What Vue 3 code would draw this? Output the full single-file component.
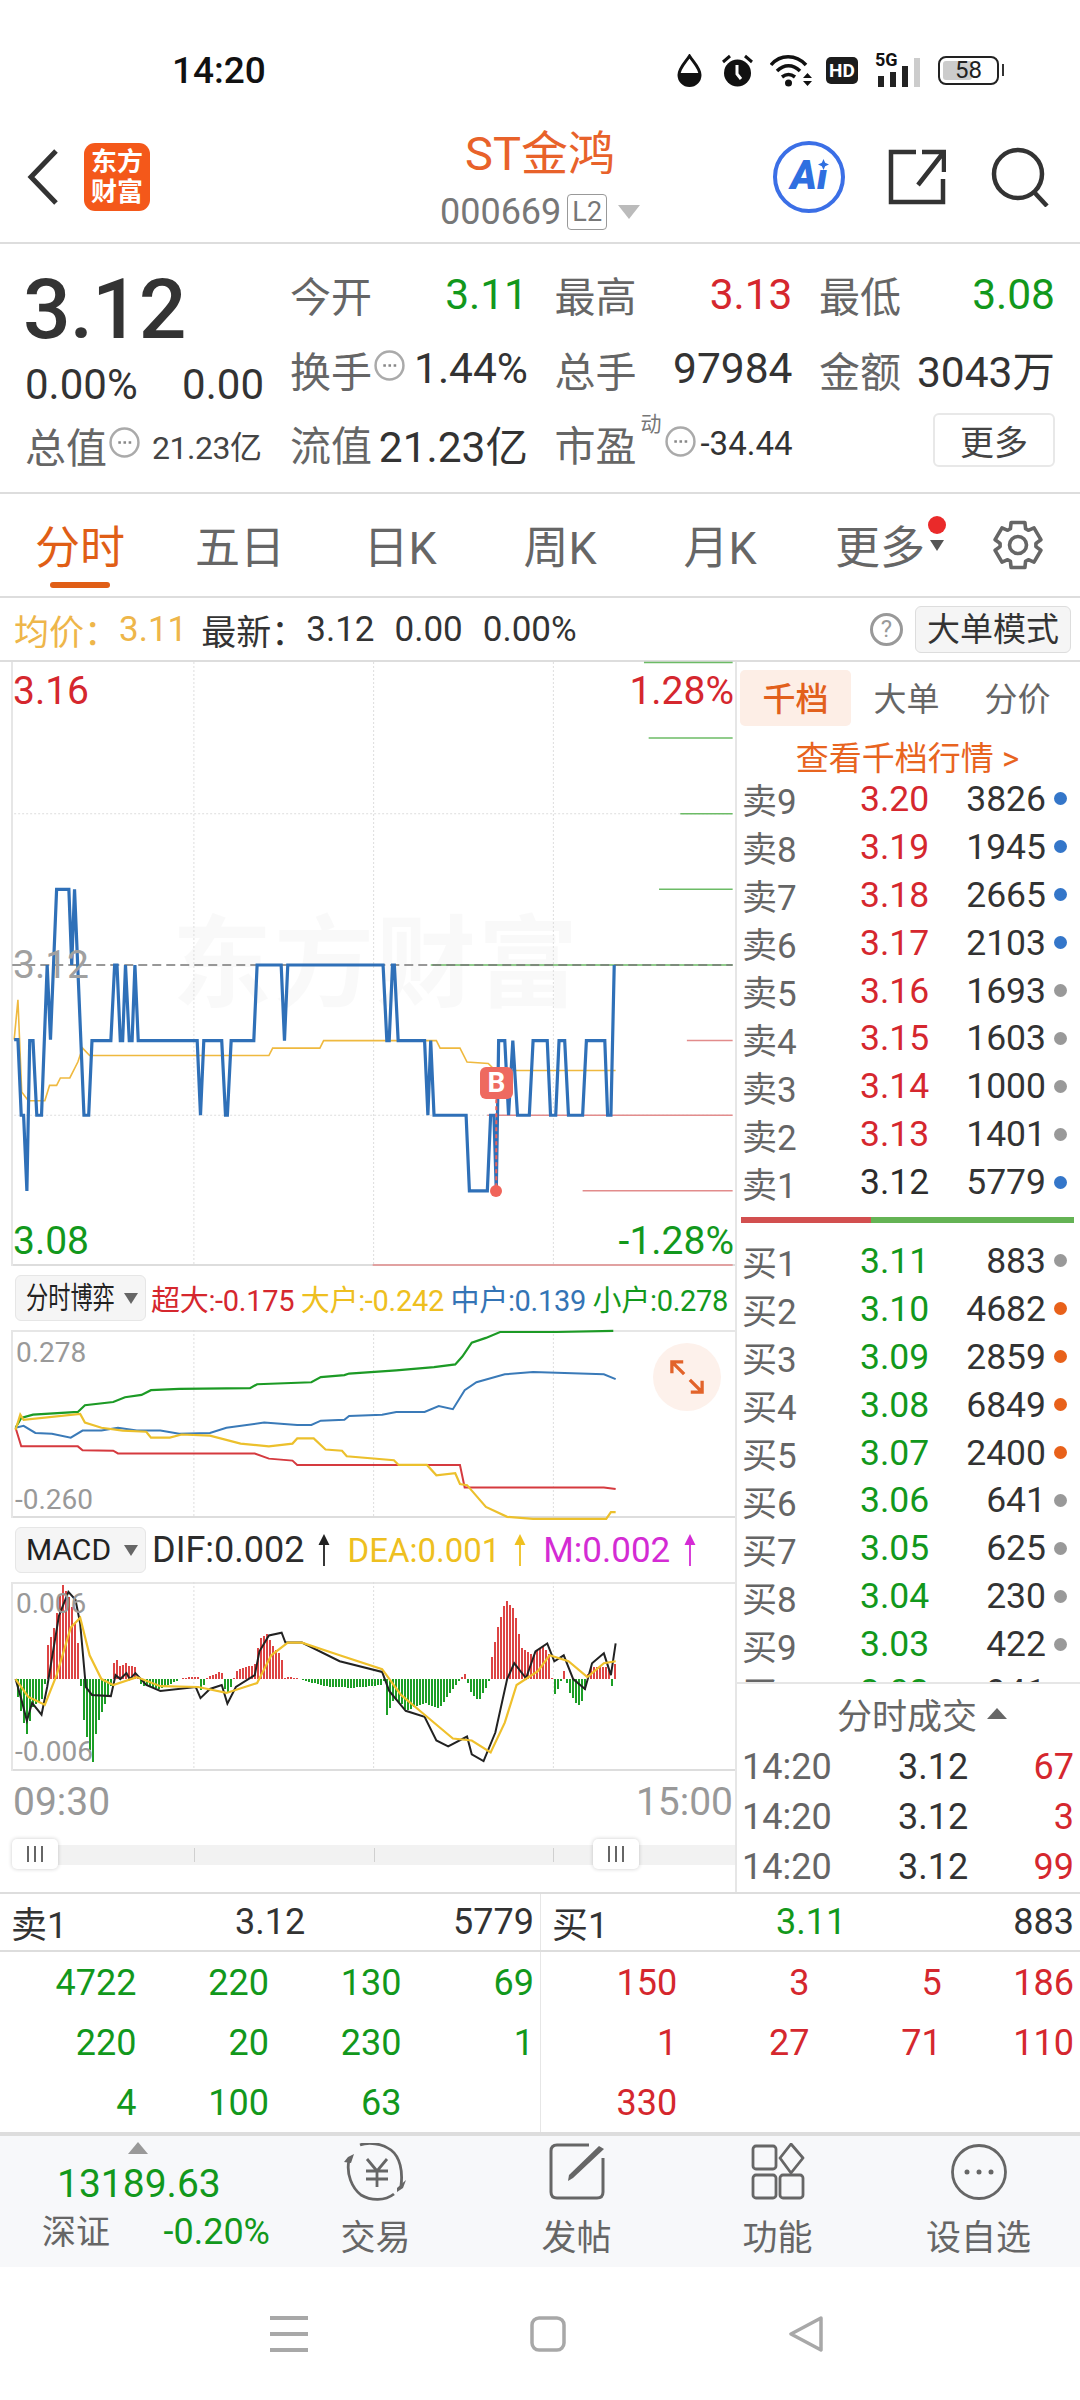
<template>
  <div class="page">
    <!-- status bar -->
    <div class="status">
      <span class="clock">14:20</span>
      <div class="status-icons">
        <svg class="st-drop" viewBox="0 0 25 33"><path d="M12.500 2C8 9 2 14 2 21a10.500 10.500 0 0 0 21 0C23 14 17 9 12.500 2Z" fill="#fff" stroke="#111" stroke-width="3"/><path d="M2 19h21v2a10.500 10.500 0 0 1-21 0Z" fill="#111"/></svg>
        <svg class="st-alarm" viewBox="0 0 31 33"><circle cx="15.500" cy="19" r="13.500" fill="#111"/><path d="M15 11v9l4 5" fill="none" stroke="#fff" stroke-width="3"/><path d="M1 8 8 2M30 8 23 2" stroke="#111" stroke-width="3"/></svg>
        <svg class="st-wifi" viewBox="0 0 43 33"><path d="M1 11C10 0 26 0 36 11M7 17c7-7 16-7 23 0M12 23c4-3 9-3 13 0" fill="none" stroke="#111" stroke-width="3.500"/><circle cx="18.500" cy="29" r="3.500" fill="#111"/><path d="M33 24l4.500-5 4.500 5ZM33 27l4.500 5 4.500-5Z" fill="#111"/></svg>
        <span class="st-hd">HD</span>
        <div class="st-sig">
          <span class="st-5g">5G</span>
          <i style="height:11px"></i><i style="height:15px"></i><i style="height:21px"></i><i class="off" style="height:29px"></i>
        </div>
        <div class="st-bat"><b></b><span>58</span></div>
        <i class="st-nub"></i>
      </div>
    </div>

    <!-- title bar -->
    <div class="head">
      <svg class="back" viewBox="0 0 32 56"><path d="M29 2 4 28l25 26" fill="none" stroke="#333" stroke-width="5"/></svg>
      <div class="logo">东方<br>财富</div>
      <div class="title">
        <div class="name">ST金鸿</div>
        <div class="code">000669<span class="l2">L2</span><i class="caret"></i></div>
      </div>
      <div class="ai"><span>Ai</span><svg viewBox="0 0 10 10"><path d="M5 0 6.500 3.500 10 5 6.500 6.500 5 10 3.500 6.500 0 5 3.500 3.500Z" fill="#2f6fe0"/></svg></div>
      <svg class="share" viewBox="0 0 58 56"><path d="M28 3H3v50h52V30M34 3h22v20M55 4 30 36" fill="none" stroke="#333" stroke-width="4.500"/></svg>
      <svg class="search" viewBox="0 0 60 60"><circle cx="28" cy="27" r="24" fill="none" stroke="#333" stroke-width="4.500"/><path d="m44 45 13 14" stroke="#333" stroke-width="4.500"/></svg>
    </div>

    <!-- quote summary -->
    <div class="quote">
      <div class="quote-left">
        <div class="price">3.12</div>
        <div class="chg"><span>0.00%</span><span>0.00</span></div>
        <div class="mcap">
          <span class="lb">总值</span>
          <svg class="dots" viewBox="0 0 30 30"><circle cx="15" cy="15" r="13.500" fill="none" stroke="#aaa" stroke-width="2.400"/><path d="M9 15h2.500M14 15h2.500M19 15h2.500" stroke="#888" stroke-width="2.400"/></svg>
          <span class="mv">21.23亿</span>
        </div>
      </div>
      <div class="quote-grid">
        <div class="cell"><span class="lb">今开</span><span class="g">3.11</span></div>
        <div class="cell"><span class="lb">最高</span><span class="r">3.13</span></div>
        <div class="cell"><span class="lb">最低</span><span class="g">3.08</span></div>
        <div class="cell"><span class="lb">换手<svg class="dots" viewBox="0 0 30 30"><circle cx="15" cy="15" r="13.500" fill="none" stroke="#aaa" stroke-width="2.400"/><path d="M9 15h2.500M14 15h2.500M19 15h2.500" stroke="#888" stroke-width="2.400"/></svg></span><span class="d">1.44%</span></div>
        <div class="cell"><span class="lb">总手</span><span class="d">97984</span></div>
        <div class="cell"><span class="lb">金额</span><span class="d">3043万</span></div>
        <div class="cell"><span class="lb">流值</span><span class="d">21.23亿</span></div>
        <div class="cell">
          <span class="lb pe">市盈<sup>动</sup><svg class="dots" viewBox="0 0 30 30"><circle cx="15" cy="15" r="13.500" fill="none" stroke="#aaa" stroke-width="2.400"/><path d="M9 15h2.500M14 15h2.500M19 15h2.500" stroke="#888" stroke-width="2.400"/></svg></span>
          <span class="d small">-34.44</span>
        </div>
        <div class="cell end"><button class="more">更多</button></div>
      </div>
    </div>

    <!-- period tabs -->
    <div class="tabs">
      <div v-for="(t, i) in tabs" :key="t" class="tab" :class="{ on: i === 0 }">
        {{ t }}
        <template v-if="t === '更多'"><i class="tab-caret"></i><i class="tab-dot"></i></template>
      </div>
      <svg class="gear" viewBox="0 0 50 50"><path :d="gearPath" fill="none" stroke="#666" stroke-width="3.600" stroke-linejoin="round"/><circle cx="25" cy="25" r="8.500" fill="none" stroke="#666" stroke-width="3.600"/></svg>
    </div>

    <!-- average / latest line -->
    <div class="avg">
      <span class="y">均价：</span><span class="y">3.11</span>
      <span class="lat">最新：</span><span>3.12</span><span class="gap">0.00</span><span class="gap">0.00%</span>
      <span class="help">?</span>
      <span class="mode">大单模式</span>
    </div>

    <div class="main">
      <div class="left">
        <!-- price chart -->
        <div class="chart price-chart">
          <div class="mark">东方财富</div>
          <svg viewBox="0 346 1558 1214" preserveAspectRatio="none">
            <path v-for="x in grid" :key="x" :d="`M${x} 346V1560`" class="dot-line"/>
            <path d="M30 651H1553M30 1257H1553" class="dot-line"/>
            <path v-for="l in greenDepth" :key="l[1]" :d="`M${l[0]} ${l[1]}H1553`" class="ln" stroke="#6cbb66" stroke-width="1.500"/>
            <path v-for="l in redDepth" :key="l[1]" :d="`M${l[0]} ${l[1]}H1553`" class="ln" stroke="#e28c8c" stroke-width="1.500"/>
            <path d="M26 955H1553" class="ln" stroke="#777" stroke-width="1.500" stroke-dasharray="9 5"/>
            <polyline :points="avgLine" class="ln" stroke="#efb93f" stroke-width="1.600"/>
            <polyline :points="priceLine" class="ln" stroke="#2f70b8" stroke-width="3.200"/>
            <path d="M1052 1225V1409" class="ln" stroke="#ee6259" stroke-width="2" stroke-dasharray="4 3"/>
          </svg>
          <span class="ax r tl">3.16</span>
          <span class="ax r tr">1.28%</span>
          <span class="ax mid">3.12</span>
          <span class="ax g bl">3.08</span>
          <span class="ax g br">-1.28%</span>
          <span class="b-tag">B</span>
          <i class="b-dot"></i>
        </div>

        <!-- 分时博弈 -->
        <div class="ind-row">
          <div class="sel"><span class="squeeze">分时博弈</span><i class="sel-caret"></i></div>
          <div class="legend">
            <span class="r">超大:-0.175</span><span class="y2">大户:-0.242</span><span class="b">中户:0.139</span><span class="g">小户:0.278</span>
          </div>
        </div>
        <div class="chart game-chart">
          <svg viewBox="0 178 1558 475" preserveAspectRatio="none">
            <path v-for="x in grid" :key="x" :d="`M${x} 178V653`" class="dot-line"/>
            <polyline :points="gameGreen" class="ln" stroke="#1c9a25" stroke-width="2.200"/>
            <polyline :points="gameBlue" class="ln" stroke="#3a7ab8" stroke-width="2"/>
            <polyline :points="gameRed" class="ln" stroke="#d53a3f" stroke-width="2"/>
            <polyline :points="gameYellow" class="ln" stroke="#ecc02c" stroke-width="2.200"/>
          </svg>
          <span class="ax gy s tl2">0.278</span>
          <span class="ax gy s bl2">-0.260</span>
          <div class="expand">
            <svg viewBox="0 0 36 36"><path d="M2 14V2h12M2 2l13 13M34 22v12H22M34 34 21 21" fill="none" stroke="#e2632a" stroke-width="3.500"/></svg>
          </div>
        </div>

        <!-- MACD -->
        <div class="ind-row">
          <div class="sel"><span class="plain">MACD</span><i class="sel-caret"></i></div>
          <div class="legend-m">
            <span class="dk f36">DIF:0.002</span><svg class="arr" viewBox="0 0 12 32"><path d="M6 32V3M2 10l4-8 4 8Z" fill="#222" stroke="#222" stroke-width="1.800"/></svg>
            <span class="y2 f33">DEA:0.001</span><svg class="arr" viewBox="0 0 12 32"><path d="M6 32V3M2 10l4-8 4 8Z" fill="#efc020" stroke="#efc020" stroke-width="1.800"/></svg>
            <span class="pk f35">M:0.002</span><svg class="arr" viewBox="0 0 12 32"><path d="M6 32V3M2 10l4-8 4 8Z" fill="#d42bd4" stroke="#d42bd4" stroke-width="1.800"/></svg>
          </div>
        </div>
        <div class="chart macd-chart">
          <svg viewBox="0 815 1558 477" preserveAspectRatio="none">
            <path v-for="x in grid" :key="x" :d="`M${x} 815V1292`" class="dot-line"/>
            <path :d="bars.red" stroke="#dd4444" stroke-width="4.240" fill="none" shape-rendering="crispEdges"/>
            <path :d="bars.green" stroke="#1c9e26" stroke-width="4.240" fill="none" shape-rendering="crispEdges"/>
            <polyline :points="macdBlack" class="ln" stroke="#222" stroke-width="2"/>
            <polyline :points="macdYellow" class="ln" stroke="#efc02c" stroke-width="2.200"/>
          </svg>
          <span class="ax gy s tl3">0.006</span>
          <span class="ax gy s bl3">-0.006</span>
        </div>

        <div class="times"><span>09:30</span><span>15:00</span></div>
        <div class="slider">
          <div class="track">
            <i v-for="n in 3" :key="n" class="tick"></i>
          </div>
          <div class="handle h1"><b></b><b></b><b></b></div>
          <div class="handle h2"><b></b><b></b><b></b></div>
        </div>
      </div>

      <!-- order book -->
      <div class="side">
        <div class="side-tabs">
          <span class="on">千档</span><span>大单</span><span>分价</span>
        </div>
        <div class="see">查看千档行情 &gt;</div>
        <div class="book">
          <div v-for="o in asks" :key="o.n" class="book-row">
            <span class="n">{{ o.n }}</span>
            <span class="p" :class="o.c">{{ o.p }}</span>
            <span class="v">{{ o.v }}</span>
            <i class="pt" :class="o.t"></i>
          </div>
          <div class="split"><i></i><b></b></div>
          <div v-for="o in bids" :key="o.n" class="book-row">
            <span class="n">{{ o.n }}</span>
            <span class="p g">{{ o.p }}</span>
            <span class="v">{{ o.v }}</span>
            <i class="pt" :class="o.t"></i>
          </div>
        </div>
        <div class="deal-head">分时成交<i></i></div>
        <div v-for="(d, i) in deals" :key="i" class="deal">
          <span class="t">14:20</span><span class="dp">3.12</span><span class="dv r">{{ d }}</span>
        </div>
      </div>
    </div>

    <!-- best quote and ticks -->
    <div class="best">
      <div class="best-half"><span class="bn">卖1</span><span class="bp">3.12</span><span class="bv">5779</span></div>
      <div class="best-half line"><span class="bn">买1</span><span class="bp g">3.11</span><span class="bv">883</span></div>
    </div>
    <div class="ticks">
      <div class="tick-grid g"><span v-for="(v, i) in sellTicks" :key="i">{{ v }}</span></div>
      <div class="tick-grid r line"><span v-for="(v, i) in buyTicks" :key="i">{{ v }}</span></div>
    </div>

    <!-- footer -->
    <div class="foot">
      <div class="index">
        <i class="up"></i>
        <div class="idx-num">13189.63</div>
        <div class="idx-sub"><span>深证</span><span class="g">-0.20%</span></div>
      </div>
      <div class="fitem">
        <svg viewBox="0 0 64 58"><path d="M16 2C24-1 38 0 47 7c9 7 12 21 10 36M5 17C2 31 8 45 17 52c10 6 24 6 33-1" fill="none" stroke="#666" stroke-width="2.800"/><path d="M0 19 4 14l6-3-3 9ZM53 45l9-8-3 8-6 4Z" fill="#666"/><path d="M23 16l10 12 10-12M22 28h22M22 36h22M33 28v16" fill="none" stroke="#666" stroke-width="2.800"/></svg>
        <span>交易</span>
      </div>
      <div class="fitem">
        <svg viewBox="0 0 64 58"><path d="M44 2H12Q6 2 6 8v41q0 6 6 6h40q6 0 6-6V15" fill="none" stroke="#666" stroke-width="3"/><path d="M54 3 59 6 28 35l-5 3 1-6Z" fill="#666"/></svg>
        <span>发帖</span>
      </div>
      <div class="fitem">
        <svg viewBox="0 0 64 58"><rect x="7" y="3" width="23" height="23" rx="3" fill="none" stroke="#666" stroke-width="2.800"/><path d="M45 1 57 15 45 30 34 15Z" fill="none" stroke="#666" stroke-width="2.800" stroke-linejoin="round"/><rect x="7" y="32" width="23" height="23" rx="3" fill="none" stroke="#666" stroke-width="2.800"/><rect x="34" y="32" width="23" height="23" rx="3" fill="none" stroke="#666" stroke-width="2.800"/></svg>
        <span>功能</span>
      </div>
      <div class="fitem">
        <svg viewBox="0 0 64 58"><circle cx="32" cy="29" r="26.500" fill="none" stroke="#666" stroke-width="2.800"/><circle cx="20" cy="29" r="2.500" fill="#666"/><circle cx="32" cy="29" r="2.500" fill="#666"/><circle cx="44" cy="29" r="2.500" fill="#666"/></svg>
        <span>设自选</span>
      </div>
    </div>

    <!-- system navigation -->
    <div class="sysnav">
      <svg class="nv-menu" viewBox="0 0 38 36"><path d="M0 2h38M0 18h38M0 34h38" stroke="#a8a8a8" stroke-width="4"/></svg>
      <svg class="nv-home" viewBox="0 0 36 36"><rect x="2" y="2" width="32" height="32" rx="7" fill="none" stroke="#a8a8a8" stroke-width="3.500"/></svg>
      <svg class="nv-back" viewBox="0 0 36 36"><path d="M33 2 3 18l30 16Z" fill="none" stroke="#a8a8a8" stroke-width="3.500" stroke-linejoin="round"/></svg>
    </div>
  </div>
</template>

<script setup>
import { computed } from 'vue'

const tabs = ['分时', '五日', '日K', '周K', '月K', '更多']
const grid = [411, 792, 1173]

// six teeth, one pointing straight up
const gearPath = computed(() => {
  const p = (deg, r) => {
    const a = (deg * Math.PI) / 180
    return `${(25 + r * Math.cos(a)).toFixed(1)} ${(25 + r * Math.sin(a)).toFixed(1)}`
  }
  let d = ''
  for (let k = 0; k < 6; k++) {
    const t = k * 60 - 90
    d += `${k ? 'L' : 'M'}${p(t - 25, 18)}L${p(t - 17, 23.5)}L${p(t + 17, 23.5)}L${p(t + 25, 18)}`
  }
  return d + 'Z'
})

// all chart points below were read off the zoomed crops, so the viewBoxes use that scale
const greenDepth = [[1365, 347], [1375, 499], [1442, 651], [1397, 803], [913, 955]]
const redDepth = [[1456, 1107], [1033, 1257], [1235, 1409], [790, 1558]]

const priceLine = '30,1105 38,1105 45,1257 50,1257 57,1409 63,1107 70,1107 78,1257 88,1257 100,955 107,1105 120,803 146,803 152,955 158,803 178,1257 188,1257 195,1107 235,1107 243,955 248,955 255,1107 260,1107 266,955 274,1107 280,1107 286,955 293,1107 418,1107 425,1257 432,1107 470,1107 478,1257 482,1257 490,1107 538,1107 545,955 596,955 603,1107 610,955 812,955 820,1107 825,1107 832,955 836,955 844,1107 900,1107 907,1257 913,1107 920,1257 988,1257 995,1409 1033,1409 1040,1257 1047,1257 1052,1409 1057,1107 1070,1107 1078,1257 1087,1107 1097,1257 1122,1257 1130,1107 1160,1107 1167,1257 1178,1257 1185,1107 1197,1107 1205,1257 1235,1257 1243,1107 1282,1107 1288,1257 1295,1257 1302,955'
const avgLine = '30,1105 38,1025 46,1210 60,1228 95,1228 105,1197 120,1197 128,1182 148,1182 165,1150 175,1122 190,1137 570,1137 578,1122 678,1122 686,1107 925,1107 933,1122 975,1122 990,1150 1035,1153 1050,1167 1305,1167'

const gameGreen = '33,425 45,400 70,392 165,385 180,368 240,360 265,348 300,342 320,330 380,327 530,325 545,315 660,310 680,297 730,292 740,288 840,280 920,272 965,265 980,245 1000,210 1030,198 1060,183 1180,183 1300,180'
const gameBlue = '33,425 50,420 75,438 110,440 150,450 175,432 215,432 250,425 290,432 340,432 380,440 445,438 480,425 560,412 630,418 660,418 680,407 730,405 740,395 810,392 840,385 900,385 930,370 960,378 985,330 1010,310 1070,290 1130,284 1280,290 1305,302'
const gameYellow = '33,430 43,392 50,405 170,390 180,412 215,425 260,432 310,435 320,450 360,450 385,442 445,445 510,465 570,472 620,465 630,452 665,452 690,480 725,483 735,497 835,507 845,519 905,519 925,545 965,540 975,567 990,570 1030,625 1075,650 1130,655 1285,655 1295,638 1305,638'
const gameRed = '33,425 45,472 165,472 175,482 240,483 250,490 540,490 570,503 620,508 630,519 975,519 985,576 1280,576 1305,580'

const macdBlack = '33,1060 45,1110 57,1165 68,1120 88,1150 100,1080 125,900 145,840 160,860 170,920 182,1080 195,1100 235,1103 245,1050 255,1060 268,1045 275,1060 287,1045 310,1075 340,1090 415,1080 425,1108 445,1085 470,1075 482,1122 500,1080 540,1050 550,990 570,950 597,943 605,968 640,968 720,1015 810,1042 825,1090 860,1140 900,1155 925,1215 950,1230 990,1205 1000,1250 1025,1267 1050,1195 1075,1060 1090,1020 1115,1058 1135,990 1160,970 1175,1015 1195,1000 1215,1060 1240,1085 1255,1020 1280,995 1295,1050 1305,970'
const macdYellow = '33,1060 60,1105 95,1125 120,1050 150,930 170,905 190,1000 215,1060 240,1075 290,1055 340,1078 420,1080 480,1095 545,1070 575,1000 610,968 640,968 720,1000 810,1035 850,1100 900,1150 960,1210 1000,1215 1040,1245 1070,1170 1095,1075 1140,1040 1165,1000 1205,1015 1245,1055 1280,1020 1305,1015'

// histogram outline: [x, height above the zero line]
const hist = [[33,0],[40,-60],[57,-140],[70,-70],[90,-50],[97,0],[100,80],[115,130],[132,240],[150,200],[165,100],[168,0],[172,-20],[180,-130],[190,-170],[195,-232],[205,-120],[220,-70],[235,-20],[238,0],[240,40],[250,50],[255,30],[267,40],[275,30],[285,35],[295,0],[300,-15],[340,-25],[375,-5],[380,0],[400,5],[420,5],[422,0],[425,-30],[435,-10],[438,0],[440,5],[470,20],[472,0],[480,-40],[490,-20],[495,0],[500,20],[520,30],[540,35],[550,100],[565,115],[580,80],[597,60],[600,0],[610,5],[630,3],[640,0],[645,-5],[700,-20],[750,-22],[810,-15],[815,0],[820,-90],[835,-50],[850,-60],[860,-80],[900,-60],[930,-75],[975,0],[985,15],[990,0],[995,-30],[1015,-55],[1035,-10],[1037,0],[1040,40],[1055,130],[1072,200],[1090,175],[1105,80],[1130,60],[1150,85],[1165,60],[1170,0],[1177,-45],[1185,-15],[1190,0],[1195,20],[1200,0],[1205,-30],[1225,-68],[1237,-50],[1243,0],[1250,30],[1290,30],[1292,0],[1293,-40],[1300,0],[1305,60]]

// one bar every 3 screen pixels
const bars = computed(() => {
  let red = ''
  let green = ''
  let j = 0
  for (let px = 18; px <= 615; px += 3) {
    const x = px * 2.119
    while (j < hist.length - 2 && hist[j + 1][0] < x) j++
    const [x0, h0] = hist[j]
    const [x1, h1] = hist[j + 1]
    const h = h0 + ((h1 - h0) * Math.min(1, (x - x0) / (x1 - x0)))
    const seg = `M${x.toFixed(2)} 1060V${(1060 - h).toFixed(1)}`
    if (h > 0) red += seg
    else if (h < 0) green += seg
  }
  return { red, green }
})

const asks = [
  { n: '卖9', p: '3.20', v: 3826, t: 'blue', c: 'r' },
  { n: '卖8', p: '3.19', v: 1945, t: 'blue', c: 'r' },
  { n: '卖7', p: '3.18', v: 2665, t: 'blue', c: 'r' },
  { n: '卖6', p: '3.17', v: 2103, t: 'blue', c: 'r' },
  { n: '卖5', p: '3.16', v: 1693, t: 'grey', c: 'r' },
  { n: '卖4', p: '3.15', v: 1603, t: 'grey', c: 'r' },
  { n: '卖3', p: '3.14', v: 1000, t: 'grey', c: 'r' },
  { n: '卖2', p: '3.13', v: 1401, t: 'grey', c: 'r' },
  { n: '卖1', p: '3.12', v: 5779, t: 'blue', c: 'dk' },
]
const bids = [
  { n: '买1', p: '3.11', v: 883, t: 'grey' },
  { n: '买2', p: '3.10', v: 4682, t: 'orange' },
  { n: '买3', p: '3.09', v: 2859, t: 'orange' },
  { n: '买4', p: '3.08', v: 6849, t: 'orange' },
  { n: '买5', p: '3.07', v: 2400, t: 'orange' },
  { n: '买6', p: '3.06', v: 641, t: 'grey' },
  { n: '买7', p: '3.05', v: 625, t: 'grey' },
  { n: '买8', p: '3.04', v: 230, t: 'grey' },
  { n: '买9', p: '3.03', v: 422, t: 'grey' },
  { n: '买10', p: '3.02', v: 941, t: 'grey' },
]
const deals = [67, 3, 99]
const sellTicks = [4722, 220, 130, 69, 220, 20, 230, 1, 4, 100, 63, '']
const buyTicks = [150, 3, 5, 186, 1, 27, 71, 110, 330, '', '', '']
</script>

<style>
body { margin: 0; background: #fff; }
</style>

<style scoped>
.page {
  width: 1080px;
  height: 2400px;
  overflow: hidden;
  background: #fff;
  color: #333;
  font-family: Roboto, "Noto Sans CJK SC", sans-serif;
}
i, b { display: block; font-style: normal; }
.g { color: #12981c; }
.r { color: #d5272e; }
.b { color: #3474b5; }
.y { color: #eeb64a; }
.y2 { color: #eebf20; }
.dk { color: #2c2c2c; }
.pk { color: #d42bd4; }

/* status bar */
.status {
  height: 120px;
  padding: 20px 76px 0 172px;
  display: flex;
  align-items: center;
  justify-content: space-between;
  box-sizing: border-box;
}
.clock { font-size: 37px; font-weight: 500; color: #111; }
.status-icons { display: flex; align-items: center; }
.st-drop { width: 25px; height: 33px; }
.st-alarm { width: 31px; height: 33px; margin-left: 20px; }
.st-wifi { width: 43px; height: 33px; margin-left: 17px; }
.st-hd {
  margin-left: 13px;
  width: 32px;
  height: 27px;
  line-height: 27px;
  text-align: center;
  background: #1c1c1c;
  color: #fff;
  font-size: 19px;
  font-weight: 700;
  border-radius: 5px;
}
.st-sig { margin-left: 17px; width: 45px; height: 33px; display: flex; align-items: flex-end; gap: 6.500px; position: relative; padding-left: 3px; box-sizing: border-box; }
.st-sig i { width: 5.500px; background: #222; }
.st-sig i.off { background: #ccc; }
.st-5g { position: absolute; left: 0; top: -4px; font-size: 18px; line-height: 20px; font-weight: 700; color: #111; }
.st-bat {
  margin-left: 18px;
  width: 61px;
  height: 29px;
  box-sizing: border-box;
  border: 2px solid #222;
  border-radius: 8px;
  position: relative;
  text-align: center;
  font-size: 24px;
  line-height: 25px;
  color: #222;
}
.st-bat b { position: absolute; left: 3px; top: 3px; bottom: 3px; width: 29px; background: #ccc; border-radius: 3px; }
.st-bat span { position: relative; }
.st-nub { width: 2px; height: 12px; margin-left: 3px; background: #333; }

/* title bar */
.head {
  height: 124px;
  padding-bottom: 9px;
  display: flex;
  align-items: center;
  border-bottom: 2px solid #ddd;
  position: relative;
  box-sizing: border-box;
}
.back { width: 32px; height: 56px; margin-left: 27px; }
.logo {
  margin-left: 25px;
  width: 66px;
  height: 68px;
  border-radius: 11px;
  background: #f4581a;
  color: #fff;
  font-size: 26px;
  font-weight: 700;
  line-height: 30px;
  text-align: center;
  padding-top: 4px;
  box-sizing: border-box;
}
.title { position: absolute; left: 0; right: 0; top: 5px; text-align: center; pointer-events: none; }
.name { font-size: 47px; line-height: 58px; color: #e8622a; }
.code { display: flex; align-items: center; justify-content: center; font-size: 36px; color: #777; line-height: 42px; margin-top: 8px; }
.l2 {
  margin-left: 6px;
  border: 1.500px solid #999;
  border-radius: 4px;
  font-size: 27px;
  line-height: 34px;
  padding: 0 4px;
}
.caret {
  margin-left: 11px;
  border-left: 11px solid transparent;
  border-right: 11px solid transparent;
  border-top: 14px solid #bbb;
}
.ai {
  margin-left: auto;
  width: 72px;
  height: 72px;
  box-sizing: border-box;
  border: 4px solid #3b6fe6;
  border-radius: 50%;
  position: relative;
  text-align: center;
  font-size: 40px;
  line-height: 62px;
  font-weight: 900;
  font-style: italic;
  color: #2f6fe0;
}
.ai svg { position: absolute; width: 11px; height: 11px; left: 41px; top: 14px; background: #fff; }
.share { width: 58px; height: 56px; margin-left: 43px; }
.search { width: 60px; height: 60px; margin-left: 44px; margin-right: 30px; }

/* quote summary */
.quote { height: 250px; display: flex; border-bottom: 2px solid #ddd; box-sizing: border-box; }
.quote-left { width: 290px; padding-left: 25px; padding-top: 16px; box-sizing: border-box; }
.price { font-size: 84px; font-weight: 500; line-height: 100px; color: #333; letter-spacing: -1px; margin-left: -2px; }
.chg { display: flex; justify-content: space-between; width: 239px; font-size: 42px; line-height: 50px; }
.mcap { display: flex; align-items: center; height: 70px; white-space: nowrap; }
.lb { color: #666; font-size: 41px; display: inline-flex; align-items: center; white-space: nowrap; }
.dots { width: 31px; height: 31px; flex: none; margin: -6px 0 0 2px; }
.mv { font-size: 32px; margin-left: 12px; color: #444; letter-spacing: -0.500px; }
.quote-grid {
  display: grid;
  grid-template-columns: 238px 238px 236px;
  column-gap: 26.500px;
  grid-auto-rows: 74.500px;
  padding-top: 13px;
}
.cell { display: flex; justify-content: space-between; align-items: center; font-size: 42.500px; white-space: nowrap; min-width: 0; }
.cell .d { color: #333; }
.cell .small { font-size: 33px; }
.pe { position: relative; }
.pe sup { font-size: 21px; line-height: 1; margin: -38px 0 0 4px; color: #777; }
.pe .dots { margin: -4px 0 0 3px; }
.end { justify-content: flex-end; }
.more {
  width: 122px;
  height: 54px;
  background: #fff;
  border: 2px solid #e8e8e8;
  border-radius: 6px;
  font: 34px Roboto, "Noto Sans CJK SC", sans-serif;
  color: #444;
  padding: 0;
  margin-top: -6px;
}

/* tabs */
.tabs { height: 104px; display: flex; align-items: center; border-bottom: 2px solid #ddd; box-sizing: border-box; }
.tab { width: 160px; text-align: center; font-size: 45px; color: #666; line-height: 110px; position: relative; height: 102px; white-space: nowrap; }
.tab.on { color: #e05e16; }
.tab.on::after {
  content: '';
  position: absolute;
  left: 50px;
  width: 60px;
  bottom: 8px;
  height: 6px;
  border-radius: 3px;
  background: #e05e16;
}
.tab-caret {
  position: absolute;
  right: 16px;
  top: 46px;
  border-left: 7.500px solid transparent;
  border-right: 7.500px solid transparent;
  border-top: 11px solid #555;
}
.tab-dot { position: absolute; right: 14px; top: 22px; width: 18px; height: 18px; border-radius: 50%; background: #ea2a2a; }
.gear { width: 50px; height: 50px; margin-left: 33px; }

/* avg line */
.avg { height: 64px; box-sizing: border-box; display: flex; align-items: center; border-bottom: 2px solid #ddd; padding: 0 9px 0 14px; font-size: 35px; color: #333; white-space: nowrap; }
.lat { margin-left: 14px; }
.gap { margin-left: 20px; }
.help {
  margin-left: auto;
  width: 33px;
  height: 33px;
  box-sizing: border-box;
  border-radius: 50%;
  border: 3px solid #999;
  color: #999;
  font-size: 24px;
  line-height: 27px;
  text-align: center;
}
.mode {
  margin-left: 12px;
  width: 156px;
  height: 47px;
  box-sizing: border-box;
  line-height: 45px;
  text-align: center;
  background: #f5f5f5;
  border: 1px solid #ddd;
  border-radius: 6px;
  font-size: 33px;
  color: #333;
}

.main { height: 1230px; display: flex; }
.left { width: 735px; flex: none; }

/* charts: rules are inset shadows so the svg fills the whole box */
.chart { position: relative; margin-left: 11px; width: 724px; box-shadow: inset 2px 0 0 #e6e6e6; }
.chart svg { position: absolute; left: -11px; top: 0; width: 735px; height: 100%; overflow: visible; }
.ln { fill: none; vector-effect: non-scaling-stroke; }
.dot-line { fill: none; stroke: #ddd; stroke-width: 1; stroke-dasharray: 2 2; vector-effect: non-scaling-stroke; }
.price-chart { height: 604px; box-shadow: inset 2px 0 0 #e6e6e6, inset 0 -2px 0 #ddd; }
.mark {
  position: absolute;
  left: 161px;
  top: 248px;
  font-size: 100px;
  line-height: 110px;
  letter-spacing: 2px;
  color: rgba(0, 0, 0, 0.025);
  font-weight: 700;
  white-space: nowrap;
}
.ax { position: absolute; font-size: 39px; line-height: 44px; }
.tl { left: 2px; top: 7px; }
.tr { right: 1px; top: 7px; }
.mid { left: 2px; top: 281px; color: #a0a0a0; }
.bl { left: 2px; bottom: 3px; }
.br { right: 1px; bottom: 3px; }
.b-tag {
  position: absolute;
  left: 469px;
  top: 405px;
  width: 33px;
  height: 32px;
  line-height: 32px;
  text-align: center;
  font-size: 28px;
  font-weight: 700;
  background: #ee6a60;
  color: #fff;
  border-radius: 6px;
}
.b-dot { position: absolute; left: 479px; top: 523px; width: 12px; height: 12px; border-radius: 50%; background: #f0645a; }

.ind-row { height: 64px; display: flex; align-items: center; padding-left: 15px; box-sizing: border-box; }
.sel {
  flex: none;
  width: 131px;
  height: 46px;
  box-sizing: border-box;
  background: #f5f5f5;
  border: 1px solid #e6e6e6;
  border-radius: 6px;
  font-size: 30px;
  line-height: 44px;
  color: #222;
  position: relative;
  white-space: nowrap;
}
.plain { position: absolute; left: 10px; top: 0; }
.squeeze { position: absolute; left: 10px; top: 0; transform: scaleX(0.74); transform-origin: left center; }
.sel-caret {
  position: absolute;
  right: 7px;
  top: 17px;
  border-left: 7px solid transparent;
  border-right: 7px solid transparent;
  border-top: 11px solid #666;
}
.legend { margin-left: 5px; flex: 1; display: flex; justify-content: space-between; font-size: 29px; white-space: nowrap; letter-spacing: -0.300px; padding-right: 7px; }
.legend-m { margin-left: 6px; flex: 1; display: flex; align-items: center; white-space: nowrap; }
.f36 { font-size: 36px; }
.f33 { font-size: 33px; }
.f35 { font-size: 35px; }
.arr { width: 12px; height: 32px; margin: 0 17px 0 14px; }
.game-chart { height: 188px; box-shadow: inset 2px 0 0 #e6e6e6, inset 0 2px 0 #e6e6e6, inset 0 -2px 0 #ddd; }
.s { font-size: 28px; }
.gy { color: #999; }
.tl2 { left: 5px; top: 1px; }
.bl2 { left: 4px; bottom: -4px; }
.expand {
  position: absolute;
  left: 642px;
  top: 13px;
  width: 68px;
  height: 68px;
  border-radius: 50%;
  background: #fdf1eb;
  display: flex;
  align-items: center;
  justify-content: center;
}
.expand svg { position: static; width: 34px; height: 34px; }
.macd-chart { height: 189px; box-shadow: inset 2px 0 0 #e6e6e6, inset 0 2px 0 #e6e6e6, inset 0 -2px 0 #ddd; }
.tl3 { left: 5px; top: 0; }
.bl3 { left: 4px; bottom: -3px; }
.times { height: 62px; display: flex; justify-content: space-between; align-items: center; padding: 0 2px 0 13px; font-size: 39px; color: #999; }
.slider { height: 59px; position: relative; }
.track {
  position: absolute;
  left: 12px;
  right: 0;
  top: 12px;
  height: 20px;
  background: #f2f2f2;
}
.tick { position: absolute; top: 3px; width: 1px; height: 14px; background: #d0d0d0; }
.tick:nth-child(1) { left: 182px; }
.tick:nth-child(2) { left: 362px; }
.tick:nth-child(3) { left: 541px; }
.handle {
  position: absolute;
  top: 6px;
  width: 46px;
  height: 30px;
  background: #fff;
  border-radius: 5px;
  box-shadow: 0 0 4px rgba(0, 0, 0, 0.2);
  display: flex;
  justify-content: center;
  align-items: center;
  gap: 5px;
}
.handle b { width: 2px; height: 16px; background: #666; }
.h1 { left: 12px; }
.h2 { left: 593px; }

/* order book */
.side { flex: 1; border-left: 2px solid #e6e6e6; box-sizing: border-box; padding-top: 8px; }
.side-tabs { height: 56px; display: flex; align-items: center; padding: 0 3px; font-size: 33px; color: #666; }
.side-tabs span { width: 111px; text-align: center; line-height: 60px; height: 56px; }
.side-tabs span.on { background: #fdeee6; color: #e2601c; border-radius: 5px; font-weight: 500; }
.see { height: 56px; line-height: 66px; text-align: center; color: #e8641f; font-size: 33px; margin-left: -2px; }
.book { height: 900px; overflow: hidden; }
.book-row { height: 47.900px; display: flex; align-items: center; font-size: 35.500px; padding: 0 13px 0 5px; }
.book-row:first-child { margin-top: -7px; }
.n { width: 118px; color: #666; font-size: 35px; white-space: nowrap; }
.p { width: 72px; }
.v { width: 114px; text-align: right; color: #333; }
.pt { width: 13px; height: 13px; border-radius: 50%; margin-left: 8px; flex: none; }
.blue { background: #3476c9; }
.grey { background: #999; }
.orange { background: #e8611a; }
.split { height: 6px; margin: 11px 6px 14px 4px; display: flex; }
.split i { width: 130px; background: #d24f4f; }
.split b { flex: 1; background: #64b354; }
.deal-head {
  height: 60px;
  box-sizing: border-box;
  border-top: 2px solid #e6e6e6;
  display: flex;
  align-items: center;
  font-size: 35px;
  color: #666;
  padding-left: 100px;
}
.deal-head i {
  margin-left: 10px;
  border-left: 10px solid transparent;
  border-right: 10px solid transparent;
  border-bottom: 11px solid #666;
}
.deal { height: 50px; display: flex; align-items: center; font-size: 36px; padding: 0 6px 0 5px; }
.t { width: 156px; color: #666; }
.dp { width: 72px; }
.dv { flex: 1; text-align: right; }

/* best quotes / ticks */
.best { height: 60px; display: flex; border-top: 2px solid #ddd; border-bottom: 2px solid #ddd; box-sizing: border-box; }
.best-half { width: 540px; display: flex; align-items: center; font-size: 36px; color: #333; padding: 0 6px 0 11px; box-sizing: border-box; }
.line { border-left: 1px solid #e6e6e6; }
.bn { width: 224px; }
.bp { width: 70px; }
.bv { flex: 1; text-align: right; }
.ticks { height: 180px; display: flex; }
.tick-grid {
  width: 540px;
  box-sizing: border-box;
  padding: 1px 6px 0 4px;
  display: grid;
  grid-template-columns: repeat(4, 1fr);
  grid-auto-rows: 60px;
  text-align: right;
  align-items: center;
  font-size: 36px;
}

/* footer */
.foot { height: 135px; border-top: 4px solid #ddd; box-sizing: border-box; background: #f7f8fa; display: flex; }
.index { width: 275px; position: relative; }
.up { position: absolute; left: 128px; top: 6px; border-left: 10px solid transparent; border-right: 10px solid transparent; border-bottom: 12px solid #999; }
.idx-num { position: absolute; left: 57px; top: 23px; font-size: 39px; line-height: 50px; color: #12981c; }
.idx-sub { position: absolute; left: 42px; top: 71px; width: 228px; display: flex; justify-content: space-between; font-size: 34px; line-height: 50px; color: #666; white-space: nowrap; }
.idx-sub .g { font-size: 36px; }
.fitem { width: 201px; display: flex; flex-direction: column; align-items: center; font-size: 35px; color: #666; }
.fitem svg { width: 64px; height: 58px; margin-top: 7px; flex: none; }
.fitem span { line-height: 48px; margin-top: 14px; white-space: nowrap; }

/* system nav */
.sysnav { height: 133px; display: flex; align-items: center; }
.nv-menu { width: 38px; height: 36px; margin-left: 270px; }
.nv-home { width: 36px; height: 36px; margin-left: 222px; }
.nv-back { width: 36px; height: 36px; margin-left: 222px; }
</style>
